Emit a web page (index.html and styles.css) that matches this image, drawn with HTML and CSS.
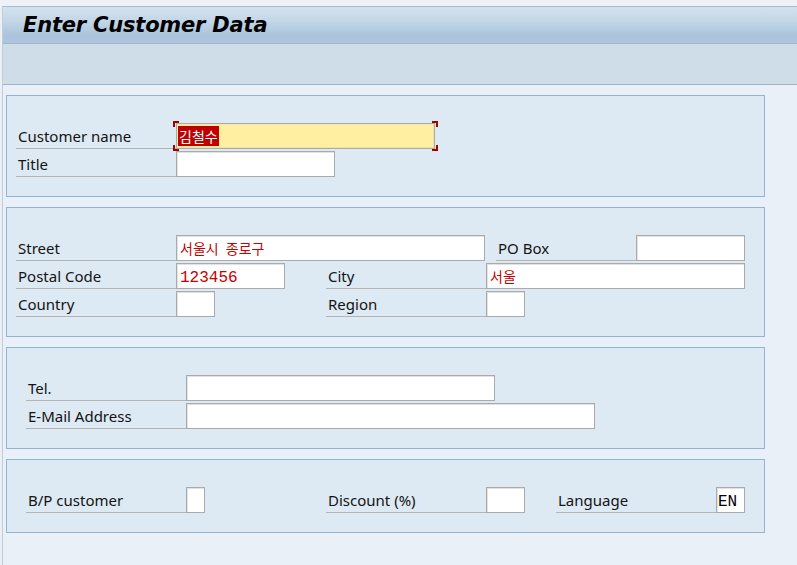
FILE: index.html
```html
<!DOCTYPE html>
<html lang="en">
<head>
<meta charset="utf-8">
<title>Enter Customer Data</title>
<link rel="stylesheet" href="styles.css">
</head>
<body>
<div class="top-strip"></div>
<div class="frame">
  <header class="titlebar"><h1 class="title">Enter Customer Data</h1></header>
  <div class="toolbar"></div>
  <main class="content">
    <section class="group">
      <div class="row">
        <div class="pair"><span class="lbl">Customer name</span><div class="field focus w259"><span class="sel kr">김철수</span></div></div>
      </div>
      <div class="row">
        <div class="pair"><span class="lbl">Title</span><div class="field w159"></div></div>
      </div>
    </section>

    <section class="group">
      <div class="row grid2">
        <div class="pair span12"><span class="lbl">Street</span><div class="field w309"><span class="val kr">서울시 종로구</span></div></div>
        <div class="pair c3"><span class="lbl w140">PO Box</span><div class="field w109"></div></div>
      </div>
      <div class="row grid2">
        <div class="pair"><span class="lbl">Postal Code</span><div class="field w109"><span class="val num">123456</span></div></div>
        <div class="pair span23"><span class="lbl">City</span><div class="field w259"><span class="val kr">서울</span></div></div>
      </div>
      <div class="row grid2">
        <div class="pair"><span class="lbl">Country</span><div class="field w39"></div></div>
        <div class="pair span23"><span class="lbl">Region</span><div class="field w39"></div></div>
      </div>
    </section>

    <section class="group indent">
      <div class="row">
        <div class="pair"><span class="lbl">Tel.</span><div class="field w309"></div></div>
      </div>
      <div class="row">
        <div class="pair"><span class="lbl">E-Mail Address</span><div class="field w409"></div></div>
      </div>
    </section>

    <section class="group indent">
      <div class="row grid4">
        <div class="pair"><span class="lbl">B/P customer</span><div class="field w19"></div></div>
        <div class="pair"><span class="lbl">Discount (%)</span><div class="field w39"></div></div>
        <div class="pair"><span class="lbl">Language</span><div class="field w29"><span class="val num dark">EN</span></div></div>
      </div>
    </section>
  </main>
</div>
</body>
</html>
```

FILE: styles.css
```css
* { box-sizing: border-box; }
html, body { margin: 0; padding: 0; }
body {
  background: #e9f0f7;
  width: 797px;
  height: 565px;
  overflow: hidden;
  font-family: "Noto Sans", "DejaVu Sans", sans-serif;
}
.top-strip {
  height: 6px;
  background: #eef2f7;
}
.frame {
  margin-left: 2px;
  border-left: 1px solid #c4ccd5;
  min-height: 559px;
}
.titlebar {
  height: 38px;
  border-top: 1px solid #a9b9cc;
  border-bottom: 1px solid #a3b6ca;
  background: linear-gradient(#d3e2ef 0%, #c3d6e7 40%, #adc5dc 75%, #acc4dc 100%);
  display: flex;
  align-items: center;
  padding-left: 20px;
}
.title {
  margin: 0;
  font-family: "DejaVu Sans", sans-serif;
  font-weight: bold;
  font-style: italic;
  font-size: 21px;
  color: #000;
  letter-spacing: -0.2px;
}
.toolbar {
  height: 41px;
  background: #cfdde8;
  border-bottom: 1px solid #9fb4c9;
}
.content {
  padding: 10px 0 0 3px;
  display: flex;
  flex-direction: column;
  gap: 10px;
}
.group {
  width: 759px;
  border: 1px solid #93b3d3;
  background: #dde9f3;
  padding: 27px 0 19px 9px;
  display: flex;
  flex-direction: column;
  gap: 2px;
}
.group.indent { padding-left: 19px; }
.row {
  height: 26px;
  display: flex;
}
.grid2 {
  display: grid;
  grid-template-columns: 310px 170px 249px;
}
.grid4 {
  display: grid;
  grid-template-columns: 300px 230px 200px;
}
.span12 { grid-column: 1 / 3; }
.span23 { grid-column: 2 / 4; }
.c3 { grid-column: 3; }
.pair {
  display: flex;
  height: 26px;
}
.lbl {
  width: 160px;
  flex: none;
  height: 26px;
  border-bottom: 1px solid #b4b4b4;
  padding-left: 2px;
  font-size: 15px;
  line-height: 26px;
  color: #141414;
  white-space: nowrap;
}
.lbl.w140 { width: 140px; }
.field {
  flex: none;
  height: 26px;
  background: #fff;
  border: 1px solid #aaaaaa;
  box-shadow: inset 1px 1px 0 #e2e2e2;
  padding: 0 0 0 3px;
  display: flex;
  align-items: center;
  position: relative;
}
.field.focus {
  background: #fff0a1;
  box-shadow: inset 1px 1px 0 #f5e9b0, inset -1px -1px 0 #f3e49a;
  padding-left: 1px;
}
.field.focus::before {
  content: "";
  position: absolute;
  top: -3px;
  bottom: -3px;
  left: -4px;
  right: -4px;
  --c: #a30000;
  background:
    linear-gradient(var(--c), var(--c)) left top / 6px 2px no-repeat,
    linear-gradient(var(--c), var(--c)) left top / 2px 6px no-repeat,
    linear-gradient(var(--c), var(--c)) right top / 6px 2px no-repeat,
    linear-gradient(var(--c), var(--c)) right top / 2px 6px no-repeat,
    linear-gradient(var(--c), var(--c)) left bottom / 6px 2px no-repeat,
    linear-gradient(var(--c), var(--c)) left bottom / 2px 6px no-repeat,
    linear-gradient(var(--c), var(--c)) right bottom / 6px 2px no-repeat,
    linear-gradient(var(--c), var(--c)) right bottom / 2px 6px no-repeat;
}
.w19 { width: 19px; }
.w29 { width: 29px; padding-left: 1px; }
.w39 { width: 39px; }
.w109 { width: 109px; }
.w159 { width: 159px; }
.w259 { width: 259px; }
.w309 { width: 309px; }
.w409 { width: 409px; }
.val {
  color: #c40000;
  white-space: nowrap;
}
.kr {
  font-family: "Noto Sans CJK KR", sans-serif;
  font-size: 14px;
  line-height: 20px;
  word-spacing: 4px;
}
.num {
  font-family: "Liberation Mono", monospace;
  font-size: 16px;
  line-height: 20px;
  padding-top: 3px;
}
.dark { color: #000; }
.sel {
  background: #bf0000;
  color: #fff;
  padding: 0 1px;
  white-space: nowrap;
}
```
